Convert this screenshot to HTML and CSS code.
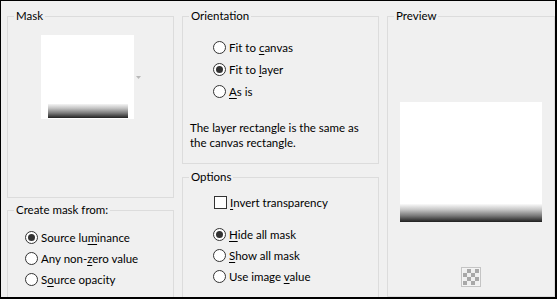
FILE: index.html
```html
<!DOCTYPE html>
<html>
<head>
<meta charset="utf-8">
<link rel="stylesheet" href="styles.css">
</head>
<body>
<div class="dialog">
  <div class="col">
    <section class="group mask">
      <span class="legend">Mask</span>
      <div class="mask-body">
        <div class="thumb"><div class="thumb-grad"></div></div>
        <svg class="arrow" width="5" height="3" viewBox="0 0 5 3"><path d="M0 0 L2.5 3 L5 0" fill="#b8b8b8"/></svg>
      </div>
    </section>
    <section class="group create">
      <span class="legend">Create mask from:</span>
      <div class="list create-list">
        <label class="opt"><span class="radio on"></span><span>Source lu<u>m</u>inance</span></label>
        <label class="opt"><span class="radio"></span><span>Any non-<u>z</u>ero value</span></label>
        <label class="opt"><span class="radio"></span><span>S<u>o</u>urce opacity</span></label>
      </div>
    </section>
  </div>
  <div class="col">
    <section class="group orient">
      <span class="legend">Orientation</span>
      <div class="list orient-list">
        <label class="opt tall"><span class="radio"></span><span>Fit to <u>c</u>anvas</span></label>
        <label class="opt tall"><span class="radio on"></span><span>Fit to <u>l</u>ayer</span></label>
        <label class="opt tall"><span class="radio"></span><span><u>A</u>s is</span></label>
      </div>
      <p class="note">The layer rectangle is the same as<br>the canvas rectangle.</p>
    </section>
    <section class="group options">
      <span class="legend">Options</span>
      <div class="list options-list">
        <label class="opt"><span class="check"></span><span><u>I</u>nvert transparency</span></label>
        <div class="sub">
          <label class="opt"><span class="radio on"></span><span><u>H</u>ide all mask</span></label>
          <label class="opt"><span class="radio"></span><span><u>S</u>how all mask</span></label>
          <label class="opt"><span class="radio"></span><span>Use image <u>v</u>alue</span></label>
        </div>
      </div>
    </section>
  </div>
  <div class="col">
    <section class="group preview">
      <span class="legend">Preview</span>
      <div class="preview-body">
        <div class="pbox"><div class="pgrad"></div></div>
        <div class="checker"><div class="checker-in"></div></div>
      </div>
    </section>
  </div>
</div>
</body>
</html>
```
FILE: styles.css
```css
* { box-sizing: border-box; }
html, body { margin: 0; padding: 0; background: #000; }
body {
  font-family: Lato, "Noto Sans", sans-serif;
  font-size: 11.5px;
  color: #000;
}
.dialog {
  width: 557px;
  height: 299px;
  background: #f0f0f0;
  border-style: solid;
  border-color: #000;
  border-width: 1px 2px 2px 1px;
  padding: 15px 0 0 6px;
  overflow: hidden;
  display: grid;
  grid-template-columns: 167px 197px 168px;
  column-gap: 8px;
  align-items: start;
}
.col { display: flex; flex-direction: column; }
.group {
  position: relative;
  border: 1px solid #dcdcdc;
}
.legend {
  position: absolute;
  top: -9px;
  left: 6px;
  padding: 0 2px;
  line-height: 16px;
  background: #f0f0f0;
  white-space: nowrap;
}
.mask { height: 182px; }
.mask-body {
  display: flex;
  padding: 18px 0 0 33px;
}
.thumb {
  width: 93px;
  height: 84px;
  background: #fff;
  display: flex;
  flex-direction: column;
  justify-content: flex-end;
  padding: 0 6px 1px 7px;
}
.thumb-grad {
  height: 14px;
  background: linear-gradient(to bottom, #f4f4f4 0%, #c4c4c4 30%, #7a7a7a 65%, #222 100%);
}
.arrow { margin: 41px 0 0 2px; }
.create { margin-top: 12px; height: 110px; }
.list { display: flex; flex-direction: column; }
.create-list { padding: 16px 0 0 17px; }
.opt {
  display: flex;
  align-items: center;
  gap: 3px;
  height: 21px;
  white-space: nowrap;
}
.opt.tall { height: 22px; }
.radio {
  width: 13px;
  height: 13px;
  border: 1px solid #333;
  border-radius: 50%;
  background: #fff;
  display: flex;
  align-items: center;
  justify-content: center;
  flex: none;
}
.radio.on::after {
  content: "";
  width: 7px;
  height: 7px;
  border-radius: 50%;
  background: #333;
}
.check {
  width: 13px;
  height: 13px;
  border: 1px solid #333;
  background: #fff;
  flex: none;
  margin-left: 1px;
}
u { text-decoration-thickness: 1px; text-underline-offset: 2px; }
.orient { height: 148px; }
.orient-list { padding: 19px 0 0 30px; }
.note {
  margin: 18px 0 0 7px;
  line-height: 15px;
  white-space: nowrap;
}
.options { margin-top: 13px; height: 140px; }
.options-list { padding: 14px 0 0 30px; }
.sub { margin-top: 11px; display: flex; flex-direction: column; }
.preview { height: 281px; }
.preview-body {
  display: flex;
  flex-direction: column;
  align-items: center;
  padding-top: 85px;
}
.pbox {
  width: 142px;
  height: 120px;
  background: #fff;
  display: flex;
  flex-direction: column;
  justify-content: flex-end;
}
.pgrad {
  height: 18px;
  background: linear-gradient(to bottom, #fafafa 0%, #c8c8c8 30%, #7a7a7a 65%, #1e1e1e 100%);
}
.checker {
  margin-top: 45px;
  width: 20px;
  height: 20px;
  border: 1px solid #c4c4c4;
  padding: 1px;
  background: #f4f4f4;
}
.checker-in {
  width: 16px;
  height: 16px;
  background-color: #f0f0f0;
  background-image: conic-gradient(#a8a8a8 25%, transparent 0 50%, #a8a8a8 0 75%, transparent 0);
  background-size: 8px 8px;
}
```
